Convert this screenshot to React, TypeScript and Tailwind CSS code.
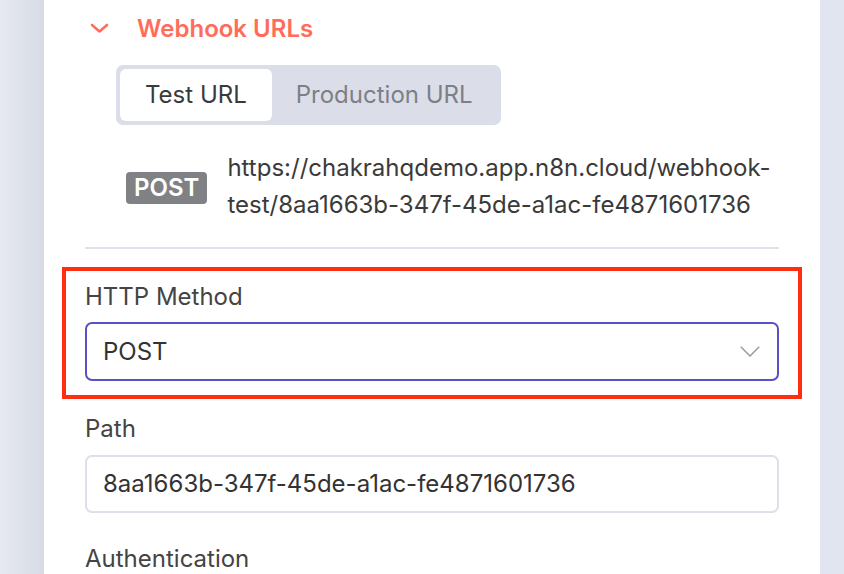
const url = "https://chakrahqdemo.app.n8n.cloud/webhook-test/8aa1663b-347f-45de-a1ac-fe4871601736";

function Field({ label, children }: { label: string; children: React.ReactNode }) {
  return (
    <div>
      <div className="text-[24px] leading-[28px] text-[#444]">{label}</div>
      {children}
    </div>
  );
}

export default function App() {
  return (
    <div className="flex h-[574px] w-[844px] overflow-hidden bg-[#e1e5ef] font-['Inter',sans-serif]">
      <div className="w-[44px] shrink-0 bg-gradient-to-r from-[#e6e9f1] to-[#d7dbe5]" />
      <div className="w-[776px] shrink-0 bg-white px-[41px] pt-[15px]">
        <div className="flex items-center">
          <svg width="20" height="12" viewBox="0 0 20 12" className="ml-[5px] -mt-[3px] text-[#ff6d5a]">
            <path d="M2 3 L9.5 9.5 L17 3" fill="none" stroke="currentColor" strokeWidth="2.6" strokeLinecap="round" strokeLinejoin="round" />
          </svg>
          <span className="ml-[27px] text-[24px] font-semibold leading-[28px] text-[#ff6d5a]">Webhook URLs</span>
        </div>

        <div className="ml-[31px] mt-[22px] flex w-fit rounded-[7px] bg-[#dbdee8] p-[4px] text-[24px]">
          <div className="flex h-[52px] items-center rounded-[6px] bg-white px-[25px] text-[#3a3a3a]">Test URL</div>
          <div className="flex h-[52px] items-center px-[24px] text-[#7c7f87]">Production URL</div>
        </div>

        <div className="ml-[41px] mt-[24px] flex items-center gap-[20px]">
          <span className="mt-[3px] shrink-0 rounded-[4px] bg-[#808185] px-[8px] py-[1px] text-[24px] font-semibold leading-[30px] text-white">POST</span>
          <span className="text-[24px] leading-[37px] text-[#3a3a3a]">{url}</span>
        </div>

        <div className="mt-[24px] h-[2px] bg-[#dfe2ea]" />

        <div className="mx-[-23px] mt-[18px] border-4 border-[#ff2d12] px-[19px] pb-[14px] pt-[12px]">
          <Field label="HTTP Method">
            <div className="mt-[11px] flex h-[59px] items-center justify-between rounded-[7px] border-2 border-[#5a4fc4] pl-[16px] pr-[17px] text-[24px] text-[#333]">
              <span>POST</span>
              <svg width="20" height="11" viewBox="0 0 20 11" className="text-[#9a9ca2]">
                <path d="M0.75 0.75 L10 10 L19.25 0.75" fill="none" stroke="currentColor" strokeWidth="1.5" />
              </svg>
            </div>
          </Field>
        </div>

        <div className="mt-[16px]">
          <Field label="Path">
            <div className="mt-[12px] flex h-[58px] items-center rounded-[7px] border-2 border-[#dde0e9] pl-[16px] text-[24px] text-[#333]">
              8aa1663b-347f-45de-a1ac-fe4871601736
            </div>
          </Field>
        </div>

        <div className="mt-[32px]">
          <div className="text-[24px] leading-[28px] text-[#444]">Authentication</div>
        </div>
      </div>
    </div>
  );
}
